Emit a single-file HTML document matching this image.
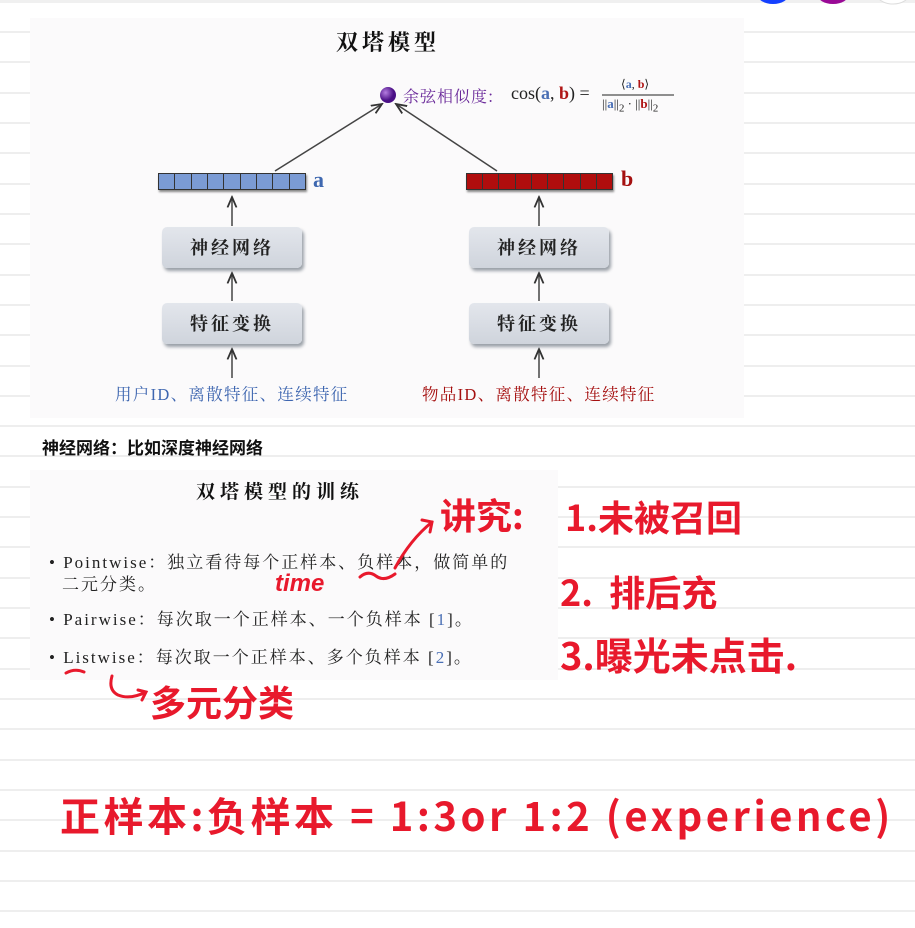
<!DOCTYPE html>
<html><head><meta charset="utf-8"><style>
*{margin:0;padding:0;box-sizing:border-box}
body{width:915px;height:928px;overflow:hidden;position:relative;background:#fff;font-family:"Liberation Sans","Noto Sans CJK SC",sans-serif}
.lines{position:absolute;left:0;top:0;width:915px;height:928px}
.a{position:absolute;white-space:nowrap}
.cjk{font-family:"Liberation Serif","Noto Serif CJK SC","Noto Sans CJK SC",serif}
.slide{position:absolute;background:#fbfafb}
.box{position:absolute;width:140px;height:41px;background:linear-gradient(#e3e6ec,#cfd4dc);border-radius:5px;box-shadow:2px 3px 3px #9aa0a8;font:bold 18px "Noto Serif CJK SC","Noto Sans CJK SC",serif;color:#222;text-align:center;line-height:41px;letter-spacing:3px}
.vec{position:absolute;height:17px;display:flex;border:1px solid #333;box-shadow:1px 2px 2px #888}
.vec div{flex:1;border-right:1px solid #333}
.vec div:last-child{border-right:none}
.hw{position:absolute;white-space:nowrap;color:#e8192c;font-family:"Noto Sans CJK SC",sans-serif;font-weight:bold}
.bul{position:absolute;font-family:"Liberation Serif","Noto Serif CJK SC",serif;font-size:17px;letter-spacing:2px;color:#222;white-space:nowrap}
</style></head><body>
<svg class="lines" width="915" height="928"><g stroke="#eeeeee" stroke-width="2">
<line x1="0" y1="32" x2="915" y2="32"/><line x1="0" y1="62" x2="915" y2="62"/><line x1="0" y1="93" x2="915" y2="93"/><line x1="0" y1="123" x2="915" y2="123"/><line x1="0" y1="153" x2="915" y2="153"/><line x1="0" y1="184" x2="915" y2="184"/><line x1="0" y1="214" x2="915" y2="214"/><line x1="0" y1="244" x2="915" y2="244"/><line x1="0" y1="275" x2="915" y2="275"/><line x1="0" y1="305" x2="915" y2="305"/><line x1="0" y1="335" x2="915" y2="335"/><line x1="0" y1="366" x2="915" y2="366"/><line x1="0" y1="396" x2="915" y2="396"/><line x1="0" y1="426" x2="915" y2="426"/><line x1="0" y1="456" x2="915" y2="456"/><line x1="0" y1="487" x2="915" y2="487"/><line x1="0" y1="517" x2="915" y2="517"/><line x1="0" y1="547" x2="915" y2="547"/><line x1="0" y1="578" x2="915" y2="578"/><line x1="0" y1="608" x2="915" y2="608"/><line x1="0" y1="638" x2="915" y2="638"/><line x1="0" y1="669" x2="915" y2="669"/><line x1="0" y1="699" x2="915" y2="699"/><line x1="0" y1="729" x2="915" y2="729"/><line x1="0" y1="760" x2="915" y2="760"/><line x1="0" y1="790" x2="915" y2="790"/><line x1="0" y1="820" x2="915" y2="820"/><line x1="0" y1="851" x2="915" y2="851"/><line x1="0" y1="881" x2="915" y2="881"/><line x1="0" y1="911" x2="915" y2="911"/></g>
<rect x="0" y="0" width="915" height="3" fill="#f0f0f0"/>
<ellipse cx="773" cy="-6" rx="16" ry="10" fill="#1540ff"/>
<ellipse cx="833" cy="-6" rx="16" ry="10" fill="#9a0a96"/>
<ellipse cx="893" cy="-6" rx="16" ry="10" fill="#fff" stroke="#ddd"/>
</svg>

<div class="slide" style="left:30px;top:18px;width:714px;height:400px"></div>
<div class="a" style="left:336px;top:26px;font:bold 22px 'Noto Serif CJK SC','Noto Sans CJK SC',serif;color:#111;letter-spacing:4px">双塔模型</div>
<svg class="a" style="left:0;top:0" width="915" height="460">
<defs><marker id="ar" markerWidth="8" markerHeight="8" refX="7" refY="4" orient="auto"><path d="M0,1 L7,4 L0,7" fill="none" stroke="#333" stroke-width="1.2"/></marker>
<radialGradient id="bg" cx="35%" cy="35%"><stop offset="0" stop-color="#b57de0"/><stop offset="1" stop-color="#4a0f86"/></radialGradient></defs>
<g stroke="#444" stroke-width="1.5" fill="none" marker-end="url(#ar)">
<line x1="275" y1="171" x2="382" y2="104"/><line x1="497" y1="171" x2="396" y2="104"/>
<line x1="232" y1="226" x2="232" y2="197"/><line x1="232" y1="301" x2="232" y2="273"/><line x1="232" y1="378" x2="232" y2="349"/>
<line x1="539" y1="226" x2="539" y2="197"/><line x1="539" y1="301" x2="539" y2="273"/><line x1="539" y1="378" x2="539" y2="349"/>
</g>
<circle cx="388" cy="95" r="8" fill="url(#bg)"/>
<line x1="602" y1="95" x2="674" y2="95" stroke="#222" stroke-width="1"/>
</svg>
<div class="a" style="left:403px;top:84px;font:16px 'Noto Serif CJK SC',serif;letter-spacing:1px;color:#6a2a9a">余弦相似度:</div>
<div class="a" style="left:511px;top:83px;font:18px 'Liberation Serif',serif;color:#222">cos(<b style="color:#4a6fb5">a</b>, <b style="color:#b01515">b</b>) =</div>
<div class="a" style="left:621px;top:77px;font:12px 'Liberation Serif',serif;color:#222">⟨<b style="color:#4a6fb5">a</b>, <b style="color:#b01515">b</b>⟩</div>
<div class="a" style="left:602px;top:96px;font:13px 'Liberation Serif',serif;color:#222">||<b style="color:#4a6fb5">a</b>||<sub>2</sub> · ||<b style="color:#b01515">b</b>||<sub>2</sub></div>

<div class="vec" style="left:158px;top:173px;width:148px;background:#7b9bd4"><div></div><div></div><div></div><div></div><div></div><div></div><div></div><div></div><div></div></div>
<div class="a" style="left:313px;top:167px;font:bold 22px 'Liberation Serif',serif;color:#3f68b0">a</div>
<div class="vec" style="left:466px;top:173px;width:147px;background:#b00d0d"><div></div><div></div><div></div><div></div><div></div><div></div><div></div><div></div><div></div></div>
<div class="a" style="left:621px;top:166px;font:bold 22px 'Liberation Serif',serif;color:#a51010">b</div>

<div class="box" style="left:162px;top:227px">神经网络</div>
<div class="box" style="left:162px;top:303px">特征变换</div>
<div class="box" style="left:469px;top:227px">神经网络</div>
<div class="box" style="left:469px;top:303px">特征变换</div>
<div class="a cjk" style="left:115px;top:381px;font-size:16.5px;letter-spacing:1.3px;color:#3e66b0">用户ID、离散特征、连续特征</div>
<div class="a cjk" style="left:422px;top:381px;font-size:16.5px;letter-spacing:1.3px;color:#a51010">物品ID、离散特征、连续特征</div>

<div class="a" style="left:42px;top:434px;font-size:17px;font-weight:bold;color:#111">神经网络：比如深度神经网络</div>

<div class="slide" style="left:30px;top:470px;width:528px;height:210px"></div>
<div class="a" style="left:196px;top:477px;font:bold 19px 'Noto Serif CJK SC',serif;color:#111;letter-spacing:5px">双塔模型的训练</div>
<div class="bul" style="left:49px;top:548px">• Pointwise：独立看待每个正样本、负样本，做简单的</div>
<div class="bul" style="left:62px;top:570px">二元分类。</div>
<div class="bul" style="left:49px;top:605px">• Pairwise：每次取一个正样本、一个负样本 [<span style="color:#4a6fb5">1</span>]。</div>
<div class="bul" style="left:49px;top:643px">• Listwise：每次取一个正样本、多个负样本 [<span style="color:#4a6fb5">2</span>]。</div>

<svg class="a" style="left:0;top:0" width="915" height="928"><g stroke="#e8192c" stroke-width="3" fill="none" stroke-linecap="round">
<path d="M360 577 Q368 570 376 576 Q384 582 395 574"/>
<path d="M395 568 Q410 540 432 522 M422 520 L432 522 L430 532"/>
<path d="M66 673 Q75 668 84 672"/>
<path d="M112 676 Q108 690 118 695 Q130 700 146 692 M138 690 L146 692 L142 700"/>
</g></svg>
<div class="hw" style="left:275px;top:570px;font-size:24px;font-family:'Liberation Sans',sans-serif;font-style:italic">time</div>
<div class="hw" style="left:440px;top:488px;font-size:36px">讲究:</div>
<div class="hw" style="left:565px;top:490px;font-size:36px">1.未被召回</div>
<div class="hw" style="left:560px;top:565px;font-size:36px">2.&nbsp;&nbsp;排后充</div>
<div class="hw" style="left:560px;top:626px;font-size:38px">3.曝光未点击.</div>
<div class="hw" style="left:150px;top:675px;font-size:36px">多元分类</div>
<div class="hw" style="left:60px;top:785px;font-size:40px;letter-spacing:3.5px">正样本:负样本 = 1:3or 1:2 (experience)</div>
</body></html>
